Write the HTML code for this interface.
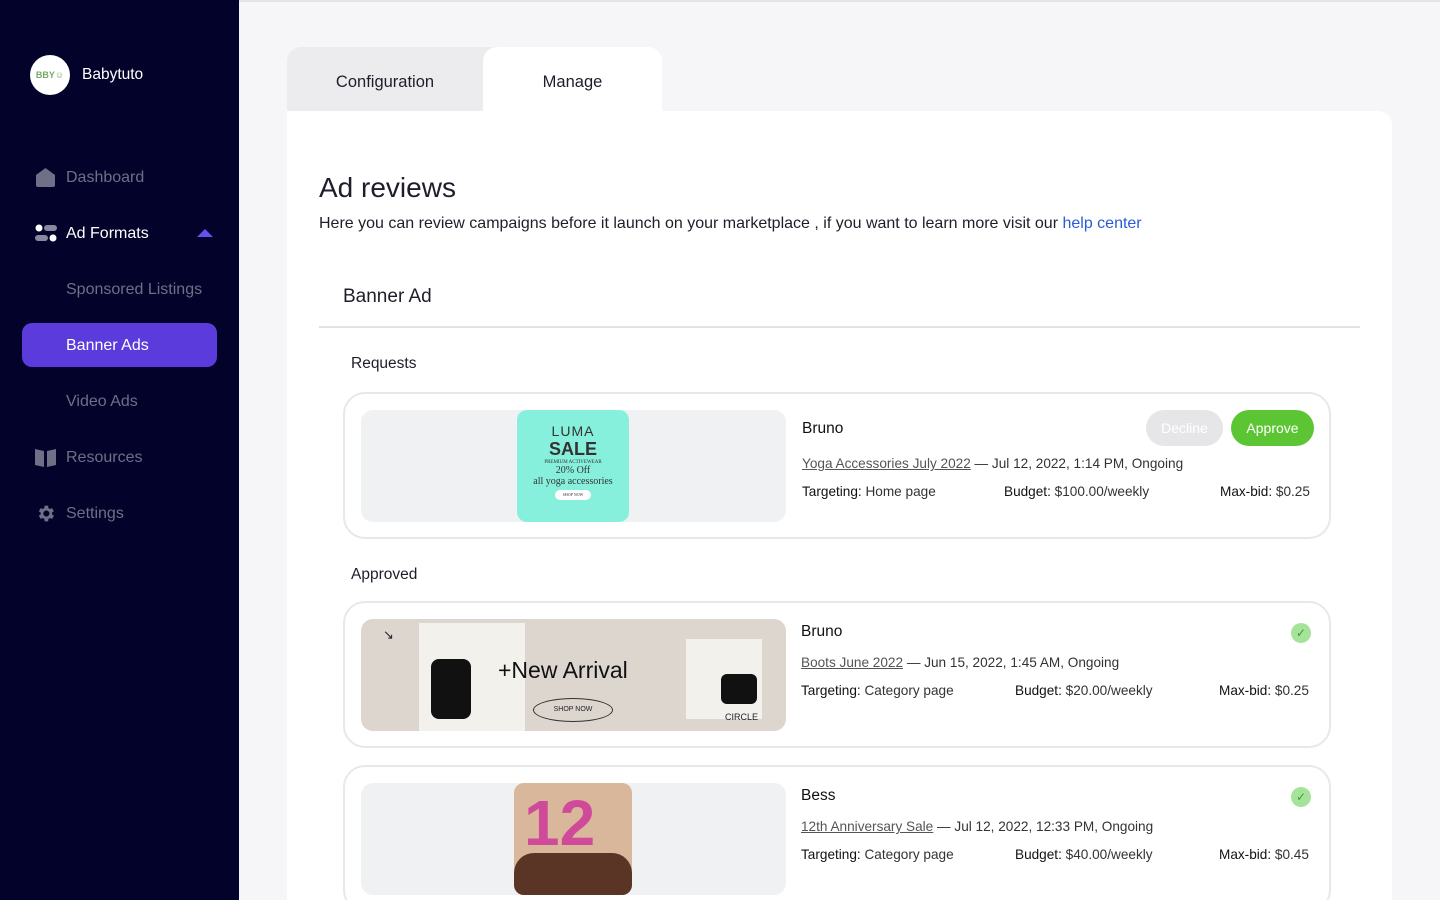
<!DOCTYPE html>
<html><head><meta charset="utf-8"><style>
*{box-sizing:border-box;margin:0;padding:0}
html,body{width:1440px;height:900px;overflow:hidden}
body{background:#f6f6f8;font-family:"Liberation Sans",sans-serif;position:relative;color:#1e1e2a}
.sb{position:absolute;left:0;top:0;width:239px;height:900px;background:#03022a}
.logo{position:absolute;left:30px;top:55px;width:40px;height:40px;border-radius:50%;background:#fff;font-size:9px;color:#7a6;display:flex;align-items:center;justify-content:center;font-weight:bold}
.brand{position:absolute;left:82px;top:66px;color:#fff;font-size:15.5px}
.ni{position:absolute;left:66px;font-size:16px;color:#6f6f88}
.ic{position:absolute;left:35px}
.act{position:absolute;left:22px;top:323px;width:195px;height:44px;border-radius:10px;background:#5b3bdb}
.topline{position:absolute;left:239px;top:0;right:0;height:2px;background:#e4e4e8}
.tab1{position:absolute;left:287px;top:47px;height:64px;background:#ececef;border-radius:14px 0 0 0;font-size:16.5px;text-align:center;line-height:70px;width:220px;padding-right:24px}
.tab2{position:absolute;left:483px;top:47px;width:179px;height:70px;background:#fff;border-radius:14px 14px 0 0;font-size:16.5px;text-align:center;line-height:70px}
.card{position:absolute;left:287px;top:111px;width:1105px;height:789px;background:#fff;border-radius:0 14px 0 0}
.abs{position:absolute}
.rc{position:absolute;left:343px;width:988px;height:147px;border:2px solid #e8e8ec;border-radius:22px}
.img{position:absolute;left:16px;top:16px;width:425px;height:112px;border-radius:12px;background:#f0f1f2;overflow:hidden}
.t{position:absolute;font-size:13.6px;color:#333}
.t b{font-weight:normal;color:#111}
u{color:#555}
.chk{position:absolute;width:20px;height:20px;border-radius:50%;background:#a6e39a;color:#3a9a30;font-size:12px;text-align:center;line-height:20px}
</style></head><body>
<div class="sb">
<div class="logo">BBY☺</div><div class="brand">Babytuto</div>
<svg class="ic" style="top:167px" width="21" height="20"><path d="M1 8 L10.5 1 L20 8 V18 Q20 20 18 20 H3 Q1 20 1 18Z" fill="#6f6f88"/></svg>
<div class="ni" style="top:169px">Dashboard</div>
<svg class="ic" style="top:224px" width="22" height="18"><circle cx="4" cy="4" r="3.5" fill="#fff"/><rect x="9" y="1" width="13" height="6" rx="3" fill="#8888a0"/><rect x="0" y="11" width="13" height="6" rx="3" fill="#8888a0"/><circle cx="18" cy="14" r="3.5" fill="#fff"/></svg>
<div class="ni" style="top:225px;color:#fff">Ad Formats</div>
<svg class="abs" style="left:197px;top:228px" width="16" height="10"><path d="M0 9 L8 1 L16 9Z" fill="#6a4ff0"/></svg>
<div class="ni" style="top:281px">Sponsored Listings</div>
<div class="act"></div><div class="ni" style="top:337px;color:#fff">Banner Ads</div>
<div class="ni" style="top:393px">Video Ads</div>
<svg class="ic" style="top:448px" width="21" height="19"><path d="M0 1 L9 3 V19 L0 17Z M12 3 L21 1 V17 L12 19Z" fill="#6f6f88"/></svg>
<div class="ni" style="top:449px">Resources</div>
<svg class="ic" style="top:503px" width="21" height="21" viewBox="0 0 24 24"><path fill="#6f6f88" d="M19.4 13a7.5 7.5 0 000-2l2.1-1.6-2-3.5-2.5 1a7 7 0 00-1.7-1L15 3h-4l-.4 2.9a7 7 0 00-1.7 1l-2.5-1-2 3.5L6.5 11a7.5 7.5 0 000 2l-2.1 1.6 2 3.5 2.5-1a7 7 0 001.7 1L11 21h4l.4-2.9a7 7 0 001.7-1l2.5 1 2-3.5zM13 15.5a3.5 3.5 0 110-7 3.5 3.5 0 010 7z"/></svg>
<div class="ni" style="top:505px">Settings</div>
</div>
<div class="topline"></div>
<div class="tab1">Configuration</div>
<div class="card"></div>
<div class="tab2">Manage</div>
<div class="abs" style="left:319px;top:172px;font-size:28px;color:#1e1e2a">Ad reviews</div>
<div class="abs" style="left:319px;top:215px;font-size:16px">Here you can review campaigns before it launch on your marketplace , if you want to learn more visit our <span style="color:#2a5bd7">help center</span></div>
<div class="abs" style="left:343px;top:286px;font-size:19px">Banner Ad</div>
<div class="abs" style="left:319px;top:326px;width:1041px;height:2px;background:#e2e2e6"></div>
<div class="abs" style="left:351px;top:355px;font-size:15.5px">Requests</div>
<div class="abs" style="left:351px;top:566px;font-size:15.5px">Approved</div>

<div class="rc" style="top:392px">
<div class="img"><div class="abs" style="left:156px;top:0;width:112px;height:112px;background:#86f0dc;border-radius:10px;text-align:center;font-family:'Liberation Serif',serif;color:#333">
<div style="font-family:'Liberation Sans';font-size:14px;margin-top:13px;letter-spacing:1px">LUMA</div><div style="font-family:'Liberation Sans';font-weight:bold;font-size:18px">SALE</div><div style="font-size:5px">PREMIUM ACTIVEWEAR</div><div style="font-size:10px">20% Off</div><div style="font-size:10px">all yoga accessories</div><div style="margin:3px auto;width:36px;height:10px;background:#fff;border-radius:5px;font-size:4px;line-height:10px">SHOP NOW</div></div></div>
<div class="t" style="left:457px;top:26px;font-size:15.5px;color:#111">Bruno</div>
<div class="t" style="left:457px;top:62px"><u>Yoga Accessories July 2022</u> — Jul 12, 2022, 1:14 PM, Ongoing</div>
<div class="t" style="left:457px;top:90px"><b>Targeting:</b> Home page</div>
<div class="t" style="left:659px;top:90px"><b>Budget:</b> $100.00/weekly</div>
<div class="t" style="left:875px;top:90px"><b>Max-bid:</b> $0.25</div>
</div>
<div class="abs" style="left:1146px;top:410px;width:77px;height:36px;border-radius:18px;background:#e6e6e8;color:#fff;font-size:14px;text-align:center;line-height:36px">Decline</div>
<div class="abs" style="left:1231px;top:410px;width:83px;height:36px;border-radius:18px;background:#5cc534;color:#fff;font-size:14px;text-align:center;line-height:36px">Approve</div>

<div class="rc" style="top:601px">
<div class="img" style="background:#ddd6cf"><div class="abs" style="left:58px;top:4px;width:106px;height:108px;background:#f3f1ec"></div><div class="abs" style="left:70px;top:40px;width:40px;height:60px;background:#111;border-radius:8px"></div><div class="abs" style="left:325px;top:20px;width:76px;height:80px;background:#f3f1ec"></div><div class="abs" style="left:360px;top:55px;width:36px;height:30px;background:#111;border-radius:6px"></div><div class="abs" style="left:137px;top:38px;font-size:23px;color:#111">+New Arrival</div><div class="abs" style="left:172px;top:79px;width:80px;height:24px;border:1px solid #333;border-radius:50%;font-size:7px;text-align:center;line-height:22px">SHOP NOW</div><div class="abs" style="left:364px;top:93px;font-size:9px">CIRCLE</div><div class="abs" style="left:22px;top:8px;font-size:13px">↘</div></div>
<div class="t" style="left:456px;top:20px;font-size:15.5px;color:#111">Bruno</div>
<div class="chk" style="left:946px;top:20px">✓</div>
<div class="t" style="left:456px;top:52px"><u>Boots June 2022</u> — Jun 15, 2022, 1:45 AM, Ongoing</div>
<div class="t" style="left:456px;top:80px"><b>Targeting:</b> Category page</div>
<div class="t" style="left:670px;top:80px"><b>Budget:</b> $20.00/weekly</div>
<div class="t" style="left:874px;top:80px"><b>Max-bid:</b> $0.25</div>
</div>

<div class="rc" style="top:765px">
<div class="img"><div class="abs" style="left:153px;top:0;width:118px;height:112px;background:#d9b79a;border-radius:10px"><div style="font-size:64px;font-weight:bold;color:#d04a9a;margin:0 0 0 10px;line-height:80px">12</div><div class="abs" style="left:0;top:70px;width:118px;height:42px;background:#5a3424;border-radius:20px 20px 10px 10px"></div></div></div>
<div class="t" style="left:456px;top:20px;font-size:15.5px;color:#111">Bess</div>
<div class="chk" style="left:946px;top:20px">✓</div>
<div class="t" style="left:456px;top:52px"><u>12th Anniversary Sale</u> — Jul 12, 2022, 12:33 PM, Ongoing</div>
<div class="t" style="left:456px;top:80px"><b>Targeting:</b> Category page</div>
<div class="t" style="left:670px;top:80px"><b>Budget:</b> $40.00/weekly</div>
<div class="t" style="left:874px;top:80px"><b>Max-bid:</b> $0.45</div>
</div>
</body></html>
